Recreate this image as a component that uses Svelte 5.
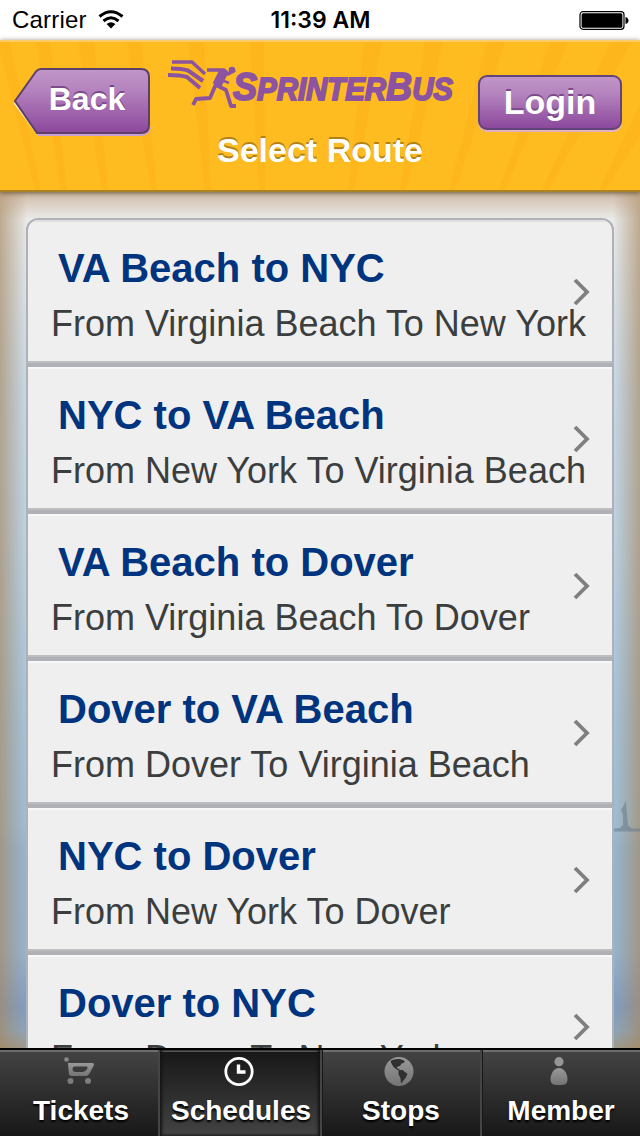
<script>
    const routes = [
        {title: 'VA Beach to NYC', detail: 'From Virginia Beach To New York'},
        {title: 'NYC to VA Beach', detail: 'From New York To Virginia Beach'},
        {title: 'VA Beach to Dover', detail: 'From Virginia Beach To Dover'},
        {title: 'Dover to VA Beach', detail: 'From Dover To Virginia Beach'},
        {title: 'NYC to Dover', detail: 'From New York To Dover'},
        {title: 'Dover to NYC', detail: 'From Dover To New York'}
    ];

    const tabs = ['Tickets', 'Schedules', 'Stops', 'Member'];
    let active = 'Schedules';

    // [left, right] at the top edge, x at the bottom edge
    const rays = [
        [-2, 10, 38], [36, 50, 64], [78, 94, 105], [127, 141, 154], [188, 204, 208], [250, 264, 262],
        [364, 382, 351], [425, 443, 403], [487, 505, 452], [550, 568, 502], [610, 632, 545], [670, 700, 602]
    ];
</script>

<main>
    <div class="status">
        <div class="carrier">
            <span>Carrier</span>
            <svg width="26" height="20" viewBox="0 0 26 20">
                <g fill="none" stroke="#000" stroke-width="3">
                    <path d="M1.5 6.5 Q13 -3 24.5 6.5"/>
                    <path d="M5.5 11 Q13 4.5 20.5 11"/>
                </g>
                <path d="M8.6 14 Q13 10.4 17.4 14 L13 18.5 Z"/>
            </svg>
        </div>
        <span class="time">11:39 AM</span>
        <svg class="battery" width="50" height="20" viewBox="0 0 50 20">
            <rect x="1" y=".7" width="44" height="17.6" rx="3" fill="#fff" stroke="#000" stroke-width="1.2"/>
            <rect x="2.600" y="2.300" width="40.800" height="14.400" rx="1.5"/>
            <path d="M46.500 6 Q49.500 7 49.500 9.500 Q49.500 12 46.500 13 Z"/>
        </svg>
    </div>

    <header>
        <svg class="rays" width="640" height="148" viewBox="0 0 640 148">
            {#each rays as [left, right, bottom]}
                <path d="M{left} 0 H{right} L{bottom + 3} 148 H{bottom - 3} Z" fill="#feb61d"/>
            {/each}
        </svg>
        <button class="back">
            <svg width="138" height="70" viewBox="0 0 138 70">
                <defs>
                    <linearGradient id="purple" x1="0" y1="0" x2="0" y2="1">
                        <stop offset="0" stop-color="#c096c8"/>
                        <stop offset=".3" stop-color="#b685bf"/>
                        <stop offset="1" stop-color="#8c489c"/>
                    </linearGradient>
                </defs>
                <path d="M25 68 H128 Q136 68 137 60" fill="none" stroke="#c9a0d8" stroke-width="2"/>
                <path d="M1.500 36 L24 66" fill="none" stroke="#fff3d0" stroke-width="2"/>
                <path d="M2 34 L23 4.500 Q25 2 28 2 H128 Q136 2 136 10 V58 Q136 66 128 66 H24 Z" fill="url(#purple)" stroke="#5d4068" stroke-width="2"/>
            </svg>
            <span>Back</span>
        </button>
        <div class="brand">
            <svg width="310" height="52" viewBox="0 0 310 52">
                <g fill="none" stroke="#8c54a0" stroke-linejoin="round">
                    <path d="M7 3 H27 L40 15" stroke-width="3.400"/>
                    <path d="M6 9.500 Q17 9.500 23 11.500 L38 22" stroke-width="4"/>
                    <path d="M3 16 Q16 16 22 18 L35 29" stroke-width="4"/>
                    <path d="M42 11 H59 L63 15 L70 11" stroke-width="3.600"/>
                    <path d="M59 12 L52 26" stroke-width="9.500"/>
                    <path d="M51 25 L45 39 L31 40 L28 46" stroke-width="3.800"/>
                    <path d="M51 26 L61 31 L66 47 H71" stroke-width="3.800"/>
                    <path d="M54 20 L64 24" stroke-width="2.500"/>
                </g>
                <circle cx="67" cy="11" r="3.300" fill="#8c54a0"/>
                <text x="68" y="41" textLength="220" lengthAdjust="spacingAndGlyphs"><tspan class="cap">S</tspan>PRINTER<tspan class="cap">B</tspan>US</text>
            </svg>
            <h1>Select Route</h1>
        </div>
        <button class="login">Login</button>
    </header>

    <section>
        <svg class="horizon" width="26" height="40" viewBox="0 0 26 40">
            <path d="M0 34 L6 33 L9 30 V20 L7 15 L10 10 L12 6 L13 20 L14 30 L18 34 H26" fill="#667b8b"/>
            <path d="M0 35 H26" stroke="#667b8b" stroke-width="3"/>
        </svg>
        <ul>
            {#each routes as route}
                <li>
                    <div class="route">
                        <h2>{route.title}</h2>
                        <p>{route.detail}</p>
                    </div>
                    <svg class="chevron" width="18" height="28" viewBox="0 0 18 28">
                        <path d="M2 2 L14 14 L2 26" fill="none" stroke="#7f7f7f" stroke-width="3.800"/>
                    </svg>
                </li>
            {/each}
        </ul>
    </section>

    <nav>
        {#each tabs as tab}
            <button class:active={tab === active} on:click={() => active = tab}>
                <svg width="32" height="32" viewBox="0 0 32 32">
                    <defs>
                        <linearGradient id="grey" x1="0" y1="0" x2="0" y2="1">
                            <stop offset="0" stop-color="#999"/>
                            <stop offset="1" stop-color="#747474"/>
                        </linearGradient>
                    </defs>
                    {#if tab === 'Tickets'}
                        <circle cx="3.500" cy="3.500" r="2.300" fill="#888"/>
                        <path fill="url(#grey)" fill-rule="evenodd" d="M5 7 H29 Q32 7 30.500 10 L26.500 17.500 Q25 20 22.500 20 H8.500 Q6 20 5.800 17 Z M12 10.500 Q9.500 10.500 9.500 13 Q9.500 16 13 16 H20 Q22 16 24 13 Q25.500 10.500 23 10.500 Z"/>
                        <circle cx="7.500" cy="25" r="3" fill="#7c7c7c"/>
                        <circle cx="25" cy="25" r="3" fill="#7c7c7c"/>
                    {:else if tab === 'Schedules'}
                        <circle cx="16" cy="15.500" r="13.200" fill="none" stroke="#fff" stroke-width="2.800"/>
                        <path d="M15.500 8.500 V16 H22.500" fill="none" stroke="#fff" stroke-width="3.400"/>
                    {:else if tab === 'Stops'}
                        <circle cx="16" cy="15.500" r="14.500" fill="url(#grey)"/>
                        <path fill="#303030" d="M7.500 5 Q11 2.500 17 3 L22 5 L20.500 7 L18.500 7.500 L17 10 L14.500 10.500 L14 12 L17 14 L14.500 14 L10.500 11 L8.500 7.500 Z"/>
                        <path fill="#303030" d="M15.500 14 L19.500 14 L24.500 18 L22.500 22 L20 25 L18 27.500 L17.500 22 L15.500 18.500 Z"/>
                    {:else}
                        <circle cx="16" cy="5.700" r="4.600" fill="#969696"/>
                        <path fill="url(#grey)" d="M16 12 C22 12 24.500 19 24.500 23.500 Q24.500 29 18 29 H14 Q7.500 29 7.500 23.500 C7.500 19 10 12 16 12 Z"/>
                    {/if}
                </svg>
                <span>{tab}</span>
            </button>
        {/each}
    </nav>
</main>

<style>
    :global(body) {
        margin: 0;
    }

    main {
        display: flex;
        flex-direction: column;
        width: 640px;
        height: 1136px;
        overflow: hidden;
        font-family: "Liberation Sans", Arial, sans-serif;
    }

    button {
        padding: 0;
        border: none;
        background: none;
        color: #fff;
        font-family: inherit;
        font-weight: bold;
        cursor: pointer;
    }

    h1, h2, p, ul {
        margin: 0;
        padding: 0;
    }

    .status {
        display: grid;
        grid-template-columns: 1fr auto 1fr;
        align-items: center;
        height: 40px;
        padding: 0 11px 0 12px;
        box-sizing: border-box;
        background-color: #fff;
        flex: none;
    }

    .carrier {
        display: flex;
        align-items: center;
        gap: 11px;
        font-size: 24px;
        line-height: 40px;
        letter-spacing: 0.2px;
    }

    .time {
        font-family: Inter, sans-serif;
        font-size: 23px;
        font-weight: 600;
    }

    .battery {
        justify-self: end;
        margin-top: 1px;
    }

    header {
        position: relative;
        z-index: 1;
        display: flex;
        align-items: flex-start;
        flex: none;
        height: 152px;
        padding: 0 18px 0 13px;
        box-sizing: border-box;
        border-top: 2px solid #fdcc66;
        border-bottom: 2px solid #ad8220;
        background-color: #febc21;
        box-shadow: 0 1px 5px rgba(70, 50, 20, 0.7);
    }

    .rays {
        position: absolute;
        top: 0;
        left: 0;
    }

    .back {
        position: relative;
        width: 138px;
        height: 70px;
        margin-top: 25px;
        font-size: 32px;
        text-shadow: 0 -2px 0 #7b4a89;
    }

    .back svg {
        position: absolute;
        top: 0;
        left: 0;
    }

    .back span {
        position: relative;
        left: 5px;
        top: -3px;
    }

    .brand {
        position: relative;
        display: flex;
        flex-direction: column;
        align-items: center;
        width: 310px;
        margin: 17px 0 0 14px;
    }

    .brand text {
        fill: #8c54a0;
        stroke: #8c54a0;
        stroke-width: 1.8px;
        font-size: 31px;
        font-weight: bold;
        font-style: italic;
    }

    .cap {
        font-size: 38px;
    }

    h1 {
        margin-top: 19px;
        color: #fff;
        font-size: 34px;
        line-height: 40px;
        text-shadow: 0 -2px 0 #b18217;
    }

    .login {
        position: relative;
        width: 144px;
        height: 55px;
        margin: 33px 0 0 auto;
        border: 2px solid #62447a;
        border-radius: 9px;
        background: linear-gradient(#c096c8, #b382bd 35%, #8c489c);
        box-shadow: 0 2px 0 #e1b2c2;
        font-size: 34px;
        text-shadow: 0 -2px 0 #7b4a89;
    }

    section {
        position: relative;
        flex: 1;
        min-height: 0;
        overflow: hidden;
        padding: 26px 26px 0;
        background:
            linear-gradient(rgba(190, 160, 130, 0.65), rgba(225, 215, 205, 0) 28px),
            linear-gradient(90deg, rgba(165, 135, 95, 0.65), rgba(165, 145, 115, 0.15) 22px, transparent 27px, transparent 613px, rgba(165, 145, 115, 0.15) 618px, rgba(165, 135, 95, 0.65)),
            linear-gradient(#f0eeeb, #dfe5e9 80px, #c7dae9 200px, #bdd4e7 340px, #a4c4de 530px, #9dbfda 630px, #94b6d4 660px, #94b4d2 760px, #7d9dc5 815px, #8aa5bd 838px, #a19786 858px);
    }

    .horizon {
        position: absolute;
        right: 0;
        top: 603px;
        opacity: 0.55;
    }

    ul {
        position: relative;
        list-style: none;
        border: 2px solid #b0b1b7;
        border-radius: 12px 12px 0 0;
        background-color: #efefef;
        overflow: hidden;
    }

    li {
        display: flex;
        align-items: center;
        height: 147px;
        box-sizing: border-box;
        border-top: 2px solid #f8f8f8;
        border-bottom: 4px solid #b0b1b7;
        box-shadow: inset 0 -2px 0 #bebebf;
    }

    li:first-child {
        border-top-color: #e0e0e1;
    }

    .route {
        flex: 1;
        padding: 5px 0 0 22px;
        white-space: nowrap;
    }

    h2 {
        padding-left: 8px;
        color: #01347e;
        font-size: 40px;
        line-height: 50px;
    }

    p {
        margin: 8px 0 0 1px;
        color: #3b3e3e;
        font-size: 36px;
        line-height: 46px;
    }

    .chevron {
        flex: none;
        margin: -2px 21px 0 -40px;
    }

    nav {
        position: relative;
        display: grid;
        grid-template-columns: repeat(4, 160px);
        flex: none;
        height: 88px;
        box-sizing: border-box;
        border-top: 2px solid #000;
        background: linear-gradient(#6d6d6d 2px, #434343 2px, #181818);
    }

    nav button {
        display: flex;
        flex-direction: column;
        align-items: center;
        padding-top: 7px;
        box-shadow: inset 2px 0 0 #454545, inset 3px 0 0 #181818;
        font-size: 28px;
        text-shadow: 0 2px 2px #000;
    }

    nav button:first-child {
        box-shadow: inset -2px 0 0 #454545;
    }

    nav button.active {
        background: linear-gradient(#6d6d6d 2px, #181818 2px, #434343);
        box-shadow: inset 2px 0 3px #151515, inset -2px 0 3px #151515;
    }

    nav svg {
        flex: none;
        margin-right: 3px;
        margin-top: -1px;
    }

    nav span {
        margin: 7px 0 0 2px;
        line-height: 32px;
    }
</style>
